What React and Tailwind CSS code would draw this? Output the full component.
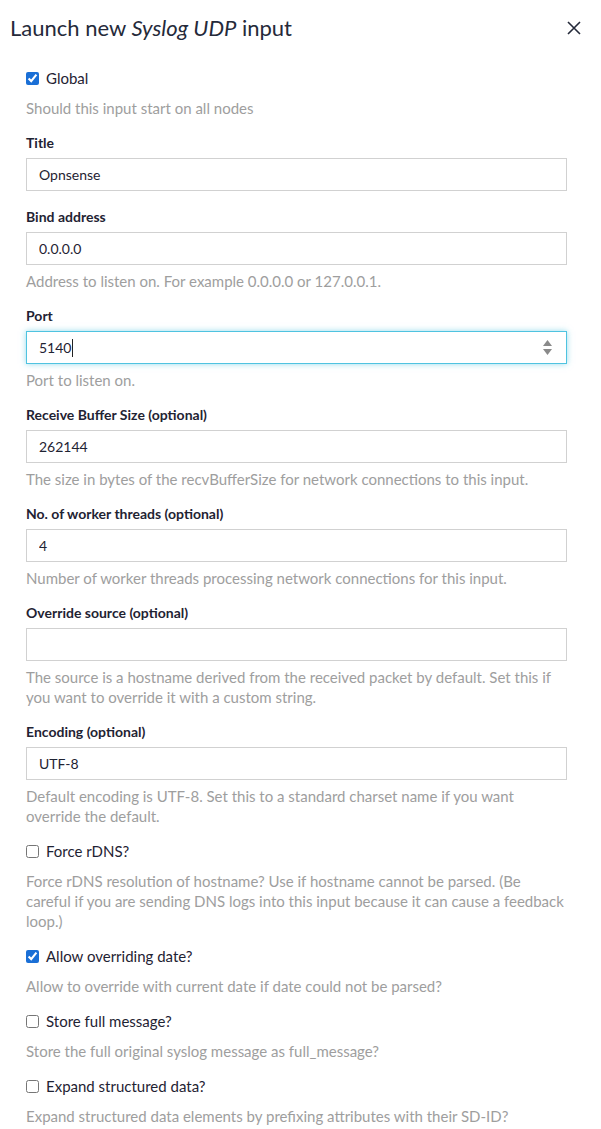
import { useState } from 'react'

const font = { fontFamily: 'Lato, "Noto Sans", sans-serif' }

function Label({ children }) {
  return <label className="block text-[14px] leading-[20px] font-bold text-[#1f2333] mb-[5px]">{children}</label>
}

function Help({ children }) {
  return <p className="mt-[6px] text-[15px] leading-[20px] text-[#9e9e9e]">{children}</p>
}

function TextField({ label, value, help }) {
  return (
    <div className={help ? 'mb-[15px]' : 'mb-[16px]'}>
      <Label>{label}</Label>
      <input
        type="text"
        defaultValue={value}
        className="block w-full h-[33px] px-[12px] border border-[#d1d1d1] bg-white text-[14px] text-[#1f2333] outline-none"
      />
      {help && <Help>{help}</Help>}
    </div>
  )
}

function CheckField({ label, checked, help }) {
  const [on, setOn] = useState(checked)
  return (
    <div className="mb-[15px]">
      <label className="flex items-center gap-[7px] h-[20px] text-[15px] text-[#1f2333]">
        <input
          type="checkbox"
          checked={on}
          onChange={() => setOn(!on)}
          className="w-[13px] h-[13px] m-0 accent-[#1a6fd6]"
        />
        {label}
      </label>
      <p className="mt-[10px] text-[15px] leading-[20px] text-[#9e9e9e]">{help}</p>
    </div>
  )
}

export default function App() {
  return (
    <div className="w-[601px] min-h-[1129px] bg-white" style={font}>
      <div className="h-[55px] flex items-center justify-between pl-[10px] pr-[20px]">
        <h2 className="text-[22px] text-[#252a3a]">
          Launch new <em>Syslog UDP</em> input
        </h2>
        <button className="text-[#252a3a]">
          <svg width="14" height="14" viewBox="0 0 14 14" fill="none" stroke="currentColor" strokeWidth="1.6">
            <path d="M1 1l12 12M13 1L1 13" />
          </svg>
        </button>
      </div>

      <div className="pl-[26px] pt-[13px] pr-[34px]">
        <CheckField label="Global" checked help="Should this input start on all nodes" />

        <TextField label="Title" value="Opnsense" />
        <TextField label="Bind address" value="0.0.0.0" help="Address to listen on. For example 0.0.0.0 or 127.0.0.1." />

        <div className="mb-[15px]">
          <Label>Port</Label>
          <div className="flex items-center h-[33px] border border-[#4fc3e0] shadow-[0_0_6px_rgba(79,195,224,0.6)] bg-white pl-[12px] pr-[14px]">
            <span className="text-[14px] text-[#1f2333]">5140</span>
            <span className="w-px h-[18px] bg-[#222] ml-[1px]" />
            <div className="ml-auto flex flex-col items-center gap-[3px]">
              <svg width="9" height="6" viewBox="0 0 9 6"><path d="M4.5 0L9 6H0z" fill="#8a8a8a" /></svg>
              <svg width="9" height="6" viewBox="0 0 9 6"><path d="M0 0h9L4.5 6z" fill="#8a8a8a" /></svg>
            </div>
          </div>
          <Help>Port to listen on.</Help>
        </div>

        <TextField
          label="Receive Buffer Size (optional)"
          value="262144"
          help="The size in bytes of the recvBufferSize for network connections to this input."
        />
        <TextField
          label="No. of worker threads (optional)"
          value="4"
          help="Number of worker threads processing network connections for this input."
        />
        <TextField
          label="Override source (optional)"
          value=""
          help="The source is a hostname derived from the received packet by default. Set this if you want to override it with a custom string."
        />
        <TextField
          label="Encoding (optional)"
          value="UTF-8"
          help="Default encoding is UTF-8. Set this to a standard charset name if you want override the default."
        />

        <CheckField
          label="Force rDNS?"
          help="Force rDNS resolution of hostname? Use if hostname cannot be parsed. (Be careful if you are sending DNS logs into this input because it can cause a feedback loop.)"
        />
        <CheckField label="Allow overriding date?" checked help="Allow to override with current date if date could not be parsed?" />
        <CheckField label="Store full message?" help="Store the full original syslog message as full_message?" />
        <CheckField label="Expand structured data?" help="Expand structured data elements by prefixing attributes with their SD-ID?" />
      </div>
    </div>
  )
}
